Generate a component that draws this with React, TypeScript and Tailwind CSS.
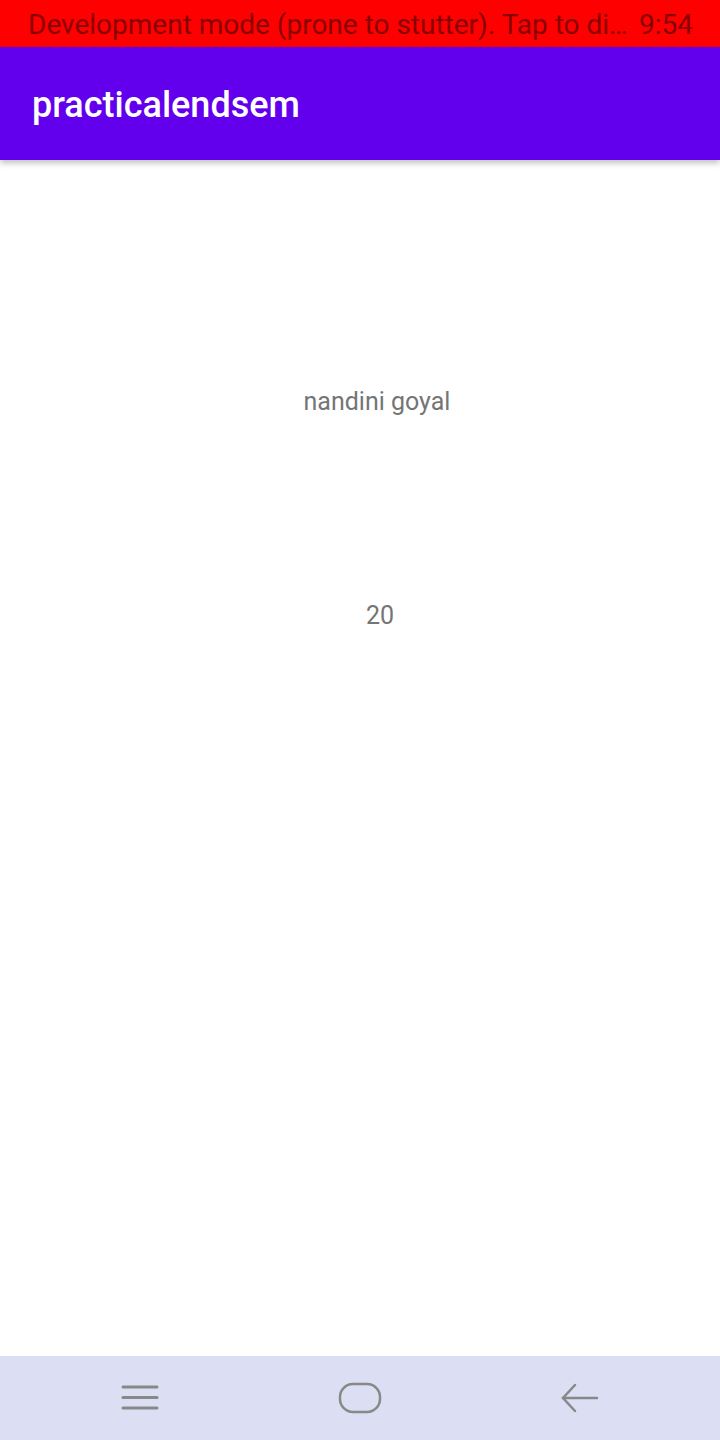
export default function App() {
  return (
    <div
      className="w-[720px] h-[1440px] flex flex-col bg-white overflow-hidden"
      style={{ fontFamily: "Roboto, 'Noto Sans', sans-serif" }}
    >
      <div className="h-[47px] bg-[#ff0000] flex items-center justify-between pl-[28px] pr-[27px] pt-[2px] text-[28px] text-[#8a0000] leading-none">
        <span>Development mode (prone to stutter). Tap to di…</span>
        <span>9:54</span>
      </div>
      <div className="h-[113px] bg-[#6200ee] flex items-center pl-[32px] pt-[2px] text-white text-[36px] font-medium shadow-[0_3px_6px_rgba(0,0,0,0.25)] relative z-10">
        practicalendsem
      </div>
      <div className="flex-1 flex flex-col text-[#757575] text-[25px] leading-none">
        <div className="h-[229px]" />
        <div className="flex justify-center pl-[34px]">nandini goyal</div>
        <div className="h-[189px]" />
        <div className="flex justify-center pl-[40px]">20</div>
      </div>
      <div className="h-[84px] bg-[#dcdff3] flex items-center justify-center">
        <div className="w-[220px] flex justify-center">
          <svg width="40" height="30" viewBox="0 0 40 30">
            <g stroke="#888888" strokeWidth="3" strokeLinecap="round">
              <line x1="3" y1="4" x2="37" y2="4" />
              <line x1="3" y1="14.5" x2="37" y2="14.5" />
              <line x1="3" y1="25" x2="37" y2="25" />
            </g>
          </svg>
        </div>
        <div className="w-[220px] flex justify-center">
          <svg width="44" height="32" viewBox="0 0 44 32">
            <rect x="2" y="2" width="40" height="28" rx="13" fill="none" stroke="#888888" strokeWidth="2.5" />
          </svg>
        </div>
        <div className="w-[220px] flex justify-center">
          <svg width="40" height="32" viewBox="0 0 40 32">
            <g stroke="#888888" strokeWidth="2.5" strokeLinecap="round" fill="none">
              <line x1="3" y1="16" x2="37" y2="16" />
              <polyline points="15,3 3,16 15,29" />
            </g>
          </svg>
        </div>
      </div>
    </div>
  );
}
